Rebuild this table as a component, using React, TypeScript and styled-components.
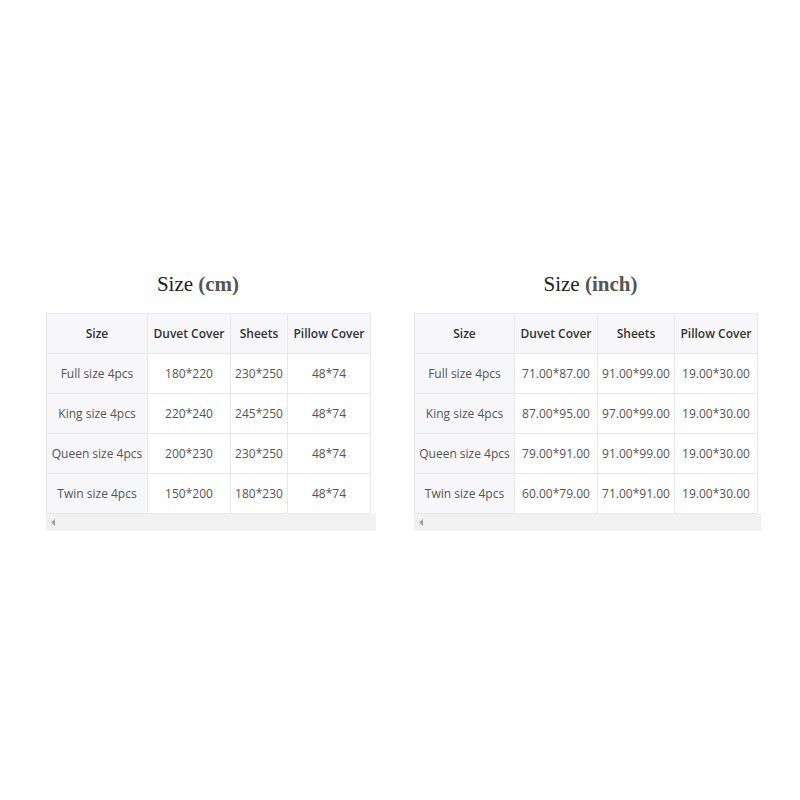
import React from 'react';
import styled, { createGlobalStyle } from 'styled-components';

const GlobalStyle = createGlobalStyle`
  html, body {
    margin: 0;
    padding: 0;
    background: #ffffff;
  }
`;

const Page = styled.div`
  width: 800px;
  height: 800px;
  display: flex;
  align-items: flex-start;
  padding-top: 272px;
  box-sizing: border-box;
`;

const Block = styled.section<{ $left: number; $titleShift: number }>`
  margin-left: ${p => p.$left}px;
  display: flex;
  flex-direction: column;

  h2 {
    margin: 0 0 16px;
    padding-right: ${p => Math.max(p.$titleShift, 0)}px;
    padding-left: ${p => Math.max(-p.$titleShift, 0)}px;
    text-align: center;
    font-family: 'Liberation Serif', 'Times New Roman', serif;
    font-size: 21px;
    line-height: 25px;
    font-weight: normal;
    color: #222;
  }

  h2 b {
    color: #555;
  }
`;

const Table = styled.table`
  border-collapse: collapse;
  table-layout: fixed;
  font-family: 'Open Sans', 'Liberation Sans', sans-serif;
  font-size: 12px;
`;

const Cell = styled.td<{ $shaded?: boolean; $head?: boolean }>`
  height: 39px;
  padding: 0 4px;
  text-align: center;
  white-space: nowrap;
  border: 1px solid #e8e8ea;
  background: ${p => (p.$shaded ? '#f7f7f9' : '#ffffff')};
  color: ${p => (p.$head ? '#333' : '#555')};
  font-weight: ${p => (p.$head ? 600 : 400)};
`;

const ScrollBar = styled.div`
  height: 17px;
  background: #f1f1f1;
  display: flex;
  align-items: center;
  padding-left: 5px;

  svg {
    display: block;
  }
`;

type SizeTable = {
  unit: string;
  left: number;
  titleShift: number;
  widths: number[];
  extra: number;
  rows: string[][];
};

const headers = ['Size', 'Duvet Cover', 'Sheets', 'Pillow Cover'];

const tables: SizeTable[] = [
  {
    unit: 'cm',
    left: 46,
    titleShift: 26,
    widths: [101, 83, 57, 83],
    extra: 6,
    rows: [
      ['Full size 4pcs', '180*220', '230*250', '48*74'],
      ['King size 4pcs', '220*240', '245*250', '48*74'],
      ['Queen size 4pcs', '200*230', '230*250', '48*74'],
      ['Twin size 4pcs', '150*200', '180*230', '48*74'],
    ],
  },
  {
    unit: 'inch',
    left: 38,
    titleShift: -6,
    widths: [100, 83, 77, 83],
    extra: 4,
    rows: [
      ['Full size 4pcs', '71.00*87.00', '91.00*99.00', '19.00*30.00'],
      ['King size 4pcs', '87.00*95.00', '97.00*99.00', '19.00*30.00'],
      ['Queen size 4pcs', '79.00*91.00', '91.00*99.00', '19.00*30.00'],
      ['Twin size 4pcs', '60.00*79.00', '71.00*91.00', '19.00*30.00'],
    ],
  },
];

const SizeChart: React.FC<{ data: SizeTable }> = ({ data }) => {
  const total = data.widths.reduce((a, b) => a + b, 0);
  return (
    <Block $left={data.left} $titleShift={data.titleShift}>
      <h2>
        Size <b>({data.unit})</b>
      </h2>
      <Table style={{ width: total }}>
        <colgroup>
          {data.widths.map((w, i) => (
            <col key={i} style={{ width: w }} />
          ))}
        </colgroup>
        <thead>
          <tr>
            {headers.map(h => (
              <Cell as="th" key={h} $shaded $head>
                {h}
              </Cell>
            ))}
          </tr>
        </thead>
        <tbody>
          {data.rows.map(row => (
            <tr key={row[0]}>
              {row.map((v, i) => (
                <Cell key={i} $shaded={i === 0}>
                  {v}
                </Cell>
              ))}
            </tr>
          ))}
        </tbody>
      </Table>
      <ScrollBar style={{ width: total + data.extra - 5 }}>
        <svg width="4" height="7" viewBox="0 0 4 7">
          <path d="M4 0 L0 3.5 L4 7 Z" fill="#a3a3a3" />
        </svg>
      </ScrollBar>
    </Block>
  );
};

export default function App() {
  return (
    <>
      <GlobalStyle />
      <Page>
        {tables.map(t => (
          <SizeChart key={t.unit} data={t} />
        ))}
      </Page>
    </>
  );
}
